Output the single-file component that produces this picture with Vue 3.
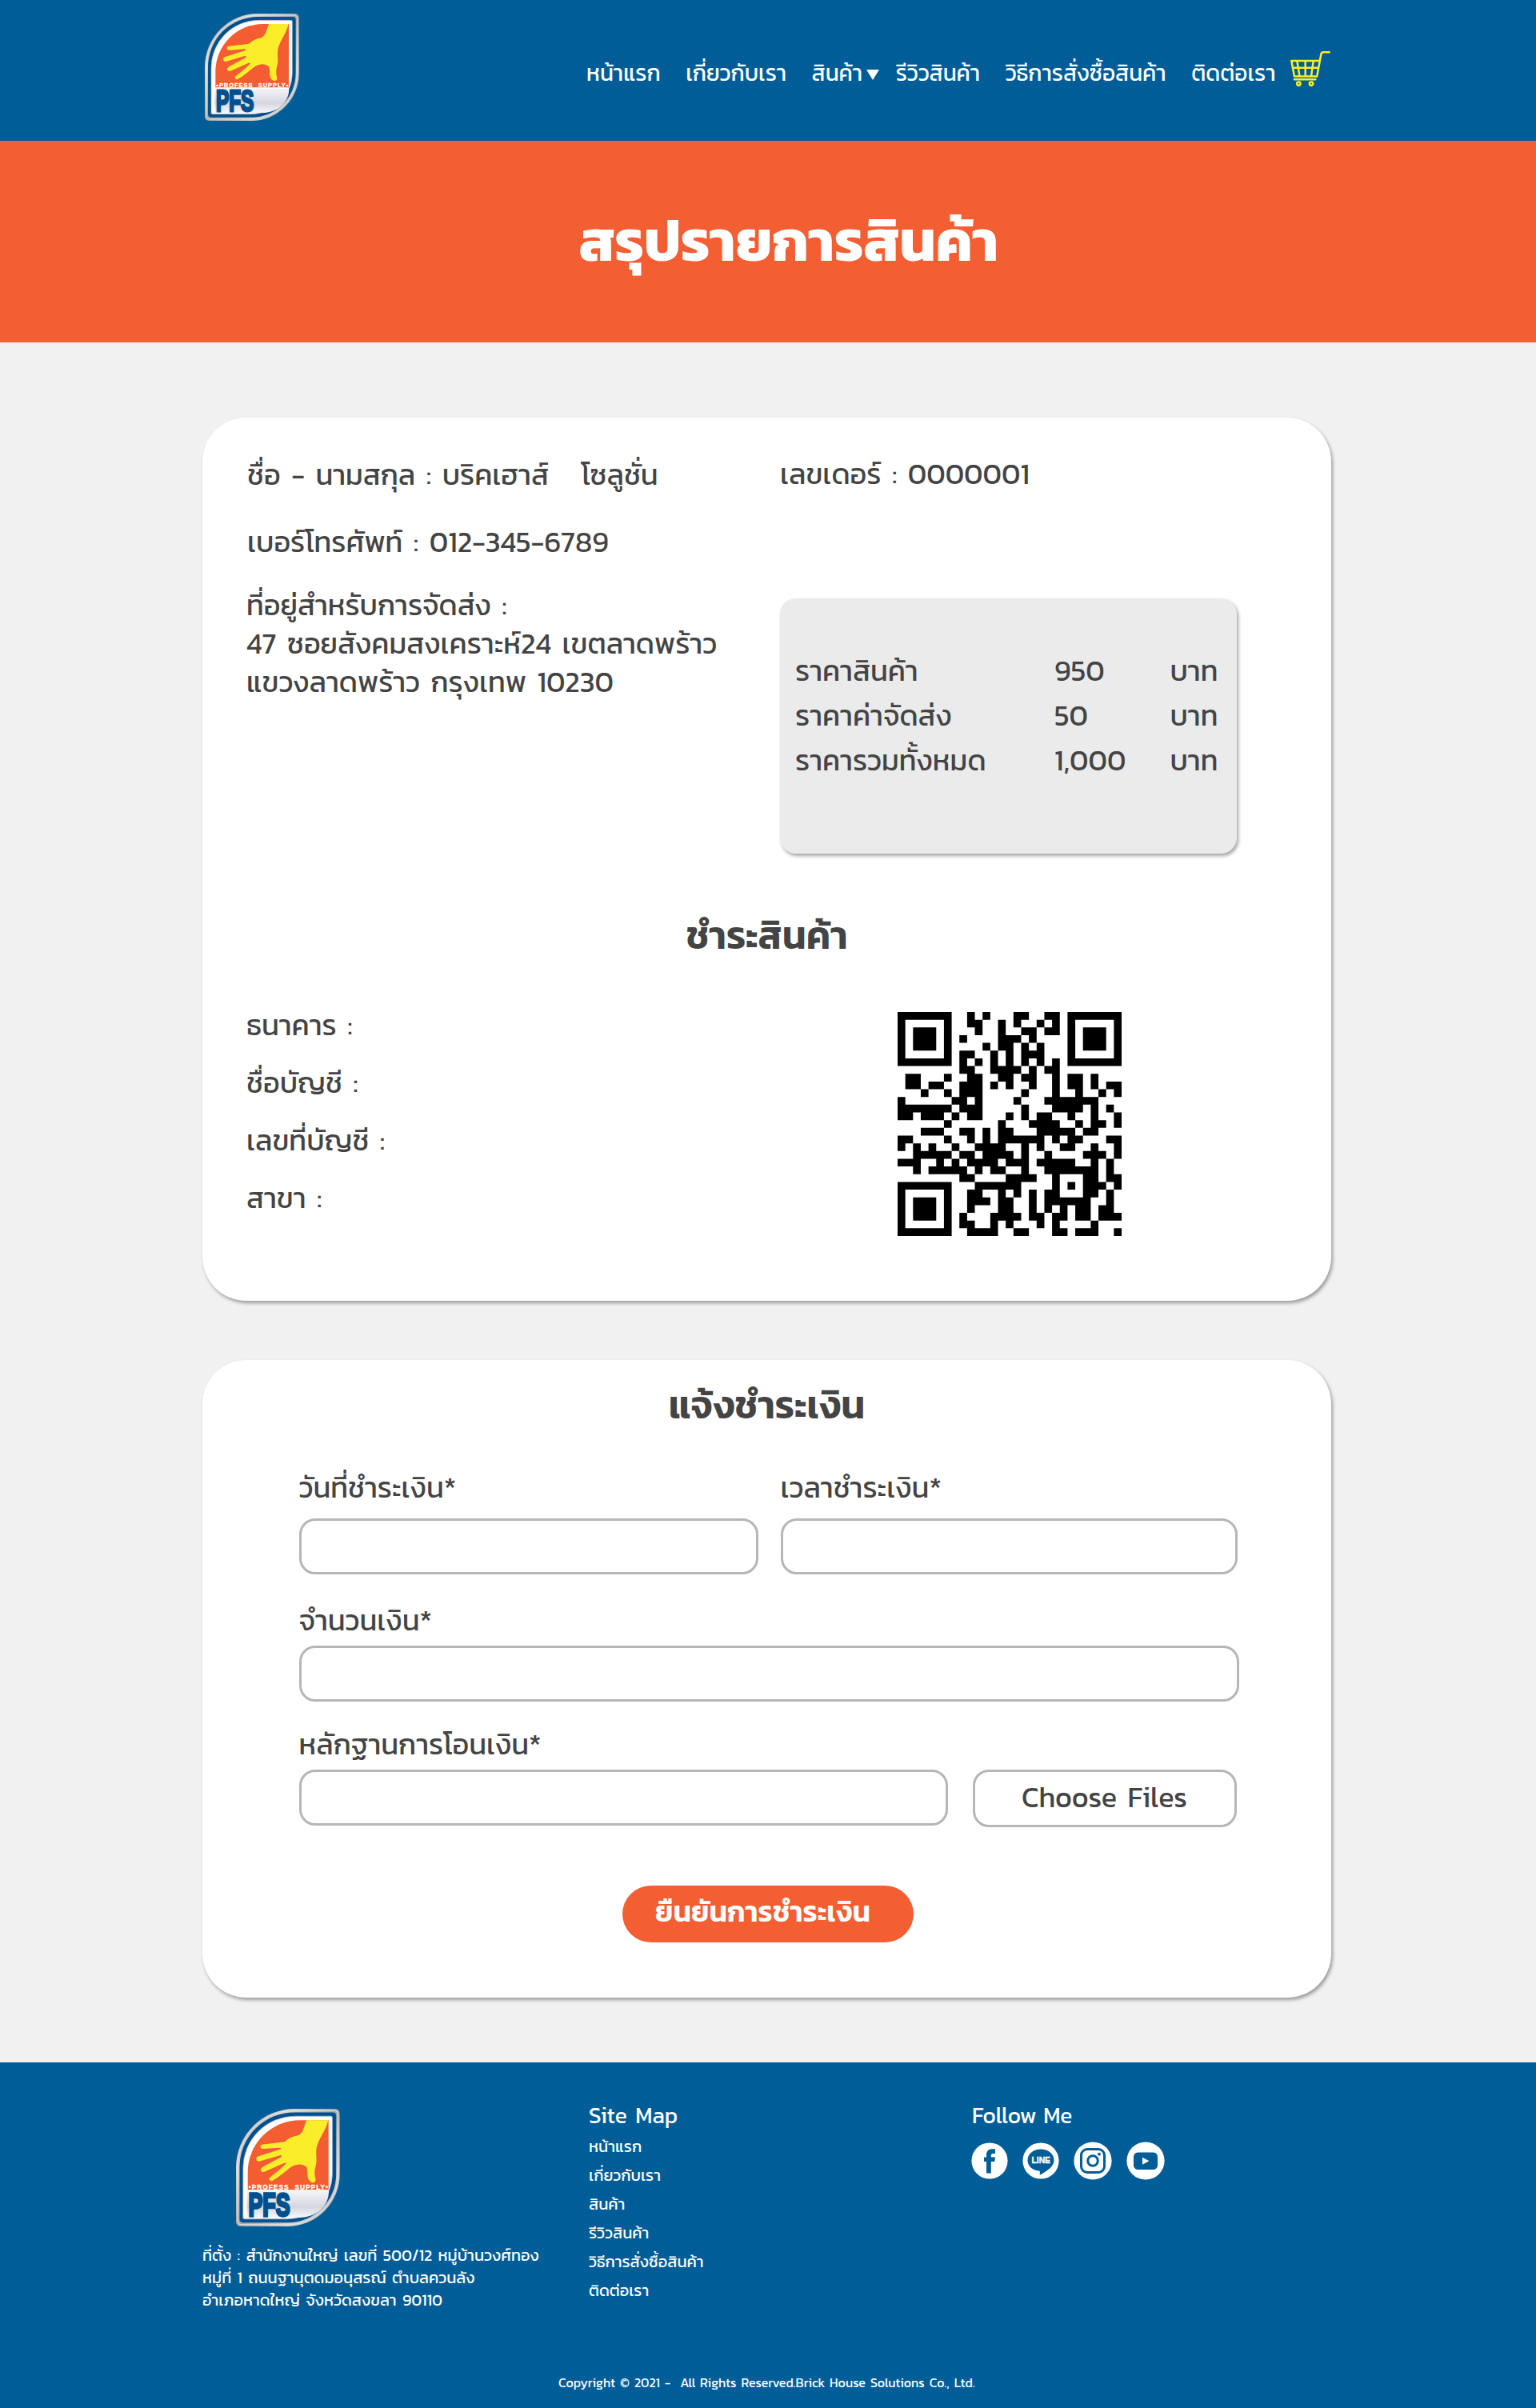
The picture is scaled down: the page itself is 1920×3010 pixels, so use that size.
<script setup>
import { h } from 'vue'

const leaf = (l, t, r, b, rt, rb, c) =>
  `M${l + rt} ${t}H${r - c}Q${r} ${t} ${r} ${t + c}V${b - rb}A${rb} ${rb} 0 0 1 ${r - rb} ${b}H${l + c}Q${l} ${b} ${l} ${b - c}V${t + rt}A${rt} ${rt} 0 0 1 ${l + rt} ${t}Z`

const BrandLogo = (props) =>
  h('svg', { viewBox: '48 51 354 402', preserveAspectRatio: 'none', role: 'img', 'aria-label': 'PFS' }, [
    h('defs', [
      h('linearGradient', { id: 'rim-' + props.uid, x1: 0, y1: 0, x2: 1, y2: 1 }, [
        h('stop', { offset: '0', 'stop-color': '#8f9498' }),
        h('stop', { offset: '.25', 'stop-color': '#d9d7d5' }),
        h('stop', { offset: '.5', 'stop-color': '#a3a5a8' }),
        h('stop', { offset: '.75', 'stop-color': '#d4d2d0' }),
        h('stop', { offset: '1', 'stop-color': '#a8a6a5' })
      ]),
      h('linearGradient', { id: 'base-' + props.uid, x1: 0, y1: 0, x2: 0, y2: 1 }, [
        h('stop', { offset: '0', 'stop-color': '#f4f4f8' }),
        h('stop', { offset: '.6', 'stop-color': '#d6d6e0' }),
        h('stop', { offset: '1', 'stop-color': '#f6f6fa' })
      ])
    ]),
    h('path', { d: leaf(48, 51, 401, 453, 200, 178, 17), fill: `url(#rim-${props.uid})` }),
    h('path', { d: leaf(54, 57, 395, 447, 194, 172, 13), fill: 'none', stroke: '#e6e4e2', 'stroke-width': 3 }),
    h('path', { d: leaf(60, 63, 389, 440, 188, 166, 12), fill: '#00508f' }),
    h('path', { d: leaf(72, 76, 376, 428, 178, 155, 5), fill: '#fff', stroke: '#9fa9b4', 'stroke-width': 2 }),
    h('path', { d: 'M88 328V268A178 178 0 0 1 266 90H363V328Z', fill: '#f45d32' }),
    h('path', { d: 'M84 332H364C364 385 320 423 262 423H84Z', fill: `url(#base-${props.uid})` }),
    h('path', {
      d: 'M288 90H362C354 124 334 146 323 180C318 202 324 222 321 240C317 256 315 264 316 278L319 292Q320 303 309 303Q301 303 294 290C289 279 294 262 288 249Q277 240 262 241Q247 243 236 249C216 265 196 283 172 297Q164 300 161 292Q160 287 168 282Q198 259 218 239Q219 234 212 236L143 267Q134 269 132 260Q131 255 139 250L202 216Q205 209 197 210L127 231Q118 232 117 222Q117 215 125 213L200 189Q205 184 197 184L141 188Q131 188 131 180Q132 173 141 173L214 164Q230 148 250 144C276 142 278 116 288 90Z',
      fill: '#faee2b'
    }),
    h('text', { x: 91, y: 326, textLength: 270, 'font-size': 22.5, fill: '#fff', stroke: '#fff', 'stroke-width': 0.8, style: 'font-family:"Liberation Sans",sans-serif;font-weight:700;word-spacing:10px' }, '•PROFESS SUPPLY•'),
    h('text', { x: 90, y: 417, textLength: 142, lengthAdjust: 'spacingAndGlyphs', 'font-size': 112, fill: '#00508f', stroke: '#00508f', 'stroke-width': 9, style: 'font-family:"Liberation Sans",sans-serif;font-weight:700' }, 'PFS')
  ])
BrandLogo.props = ['uid']

const nav = ['หน้าแรก', 'เกี่ยวกับเรา', 'สินค้า', 'รีวิวสินค้า', 'วิธีการสั่งซื้อสินค้า', 'ติดต่อเรา']

const customerName = 'ชื่อ - นามสกุล : บริคเฮาส์   โซลูชั่น'
const copyright = 'Copyright © 2021 -  All Rights Reserved.Brick House Solutions Co., Ltd.'

const prices = [
  ['ราคาสินค้า', '950'],
  ['ราคาค่าจัดส่ง', '50'],
  ['ราคารวมทั้งหมด', '1,000']
]

const bank = ['ธนาคาร :', 'ชื่อบัญชี :', 'เลขที่บัญชี :', 'สาขา :']

// Dark modules per row, as column numbers and ranges; the three finders are drawn apart.
const qrRows = [
  '9 11 15-16 19-20', '9-10 13 15 18 20', '10 13 16-17 19-20', '8 13-15 17', '11 13-14 16 18',
  '8-9 12 14 16-18', '8 10 12 14 16 18 20', '8-9 12-15 17 19-20', '1-2 6 9-10 13-14 16-17 20 22-23 25',
  '1-2 4-5 8-10 12 14 17 20 22-23 25 27-28', '3 6 8-10 16 20 23 26 28', '0 7-8 10 15 19-25',
  '0-6 8-10 16 20-23 25 27', '0-1 3-5 7 9-10 14 16 18-19 22 25 28', '6 13 17-20 23 25-26 28',
  '3-5 8-9 11 13-14 18-22 24-25', '0-1 6 9 11 13-18 20 22-23 27-28', '0 2 4 7 10-13 16 18 21-22 25 28',
  '2-6 8-9 11-14 16 19 24-26 28', '0-2 5 7 9-12 14-16 18-22 25 27', '2 4-8 10 12-13 16 19-25 27',
  '8-9 14-17 20 24-25 27-28', '10-15 20 22 24-26 28', '9-10 13 15 17 19-20 24-25 27',
  '9-11 13-14 17 19-24 27', '9 13-14 17 19 21 23-24 26-27', '8 12-15 17-18 20-21 23-24 26-28',
  '8-9 12 14 18 20 25', '9-12 15-16 20-21 23-25 28'
]
const qrPath = qrRows
  .map((row, y) => row.split(' ').map((part) => {
    const [a, b = a] = part.split('-').map(Number)
    return `M${a} ${y}H${b + 1}V${y + 1}H${a}Z`
  }).join(''))
  .join('')
const finders = [[0, 0], [22, 0], [0, 22]]
</script>

<template>
  <div class="page">
    <header class="header">
      <BrandLogo uid="top" class="logo" />
      <nav class="nav">
        <a v-for="(item, i) in nav" :key="item" :class="{ 'has-menu': i === 2 }">{{ item }}<svg v-if="i === 2" class="caret" viewBox="0 0 16 13"><path d="M0 0H16L8 13Z" fill="#fff" /></svg></a>
      </nav>
      <svg class="cart" viewBox="0 0 50 44" fill="none" stroke="#faee2b" stroke-width="2.5" stroke-linejoin="round" stroke-linecap="round">
        <path d="M1.300 12H36M1.300 12L5 31.400H33.200L38.400 3.600Q39 1.300 41.400 1.300H48.700M2.800 20.800H34.800M8.300 12L11.500 31M18.700 12V31M28.800 12L26 31" />
        <path d="M5 35.200H31.200" />
        <circle cx="10.400" cy="40.600" r="2.200" /><circle cx="26" cy="40.600" r="2.200" />
      </svg>
    </header>

    <section class="banner"><h1>สรุปรายการสินค้า</h1></section>

    <main>
      <section class="card summary">
        <div class="order">
          <div class="customer">
            <p>{{ customerName }}</p>
            <p class="phone">เบอร์โทรศัพท์ : 012-345-6789</p>
            <address>ที่อยู่สำหรับการจัดส่ง :<br>47 ซอยสังคมสงเคราะห์24 เขตลาดพร้าว<br>แขวงลาดพร้าว กรุงเทพ 10230</address>
          </div>
          <div class="totals">
            <p>เลขเดอร์ : 0000001</p>
            <div class="price-box">
              <template v-for="[label, amount] in prices" :key="label">
                <span>{{ label }}</span><span>{{ amount }}</span><span>บาท</span>
              </template>
            </div>
          </div>
        </div>
        <h2>ชำระสินค้า</h2>
        <div class="payment">
          <ul><li v-for="line in bank" :key="line">{{ line }}</li></ul>
          <svg class="qr" viewBox="0 0 29 29">
            <path :d="qrPath" />
            <g v-for="[x, y] in finders" :key="`${x}-${y}`" :transform="`translate(${x} ${y})`">
              <path fill-rule="evenodd" d="M0 0H7V7H0ZM1 1V6H6V1ZM2 2H5V5H2Z" />
            </g>
          </svg>
        </div>
      </section>

      <section class="card notify">
        <h2>แจ้งชำระเงิน</h2>
        <form @submit.prevent>
          <div class="row top">
            <label class="date">วันที่ชำระเงิน*<input type="text"></label>
            <label class="time">เวลาชำระเงิน*<input type="text"></label>
          </div>
          <label class="amount">จำนวนเงิน*<input type="text"></label>
          <div class="row files">
            <label class="proof">หลักฐานการโอนเงิน*<input type="text"></label>
            <button type="button" class="choose">Choose Files</button>
          </div>
          <button type="submit" class="confirm">ยืนยันการชำระเงิน</button>
        </form>
      </section>
    </main>

    <footer class="footer">
      <div class="columns">
        <div class="about">
          <BrandLogo uid="foot" class="logo" />
          <p>ที่ตั้ง : สำนักงานใหญ่ เลขที่ 500/12 หมู่บ้านวงศ์ทอง<br>หมู่ที่ 1 ถนนฐานุตดมอนุสรณ์ ตำบลควนลัง<br>อำเภอหาดใหญ่ จังหวัดสงขลา 90110</p>
        </div>
        <div class="sitemap">
          <h3>Site Map</h3>
          <a v-for="item in nav" :key="item">{{ item }}</a>
        </div>
        <div class="follow">
          <h3>Follow Me</h3>
          <div class="social">
            <svg viewBox="0 0 46 46" width="46" height="46">
              <circle cx="23" cy="23" r="22.600" fill="#fff" />
              <path d="M19 38.500V24H16V18.500H19V16Q19 8.300 25.500 8.300H30V14H27.300Q24.800 14 24.800 16.300V18.500H30L29.300 24H24.800V38.500Z" fill="#005d97" />
            </svg>
            <svg viewBox="0 0 46 46" width="46" height="46">
              <circle cx="23" cy="23" r="22.600" fill="#fff" />
              <path d="M23 8.600C32.400 8.600 39.500 14.600 39.500 22.300C39.500 30 31 35.800 22.800 40.300C21.600 40.900 21.500 40 21.800 38.500C22.200 36.600 22 35.700 20 35.500C12 34.700 6.500 29.200 6.500 22.300C6.500 14.600 13.600 8.600 23 8.600Z" fill="#005d97" />
              <text x="11.500" y="26.300" textLength="23.500" lengthAdjust="spacingAndGlyphs" class="line-word">LINE</text>
            </svg>
            <svg viewBox="0 0 48 48" width="48" height="48">
              <circle cx="24" cy="24" r="23.600" fill="#fff" />
              <rect x="9.500" y="9.500" width="29" height="29" rx="7.500" fill="none" stroke="#005d97" stroke-width="3" />
              <circle cx="24" cy="24" r="6.300" fill="none" stroke="#005d97" stroke-width="3" />
              <circle cx="32" cy="15.700" r="1.900" fill="#005d97" />
            </svg>
            <svg viewBox="0 0 48 48" width="48" height="48">
              <circle cx="24" cy="24" r="23.600" fill="#fff" />
              <rect x="9" y="13.500" width="30" height="21.500" rx="5.500" fill="#005d97" />
              <path d="M20 19.700V28.700L28.500 24.200Z" fill="#fff" />
            </svg>
          </div>
        </div>
      </div>
      <p class="copyright">{{ copyright }}</p>
    </footer>
  </div>
</template>

<style>
body { margin: 0; }
</style>

<style scoped>
* { box-sizing: border-box; }
.page {
  width: 1920px;
  height: 3010px;
  background: #f1f1f1;
  color: #444;
  font: 400 36px/48px Kanit, Prompt, "Noto Sans", sans-serif;
  word-spacing: 5.200px;
  white-space: pre;
}
h1, h2, h3, p, ul { margin: 0; padding: 0; list-style: none; }
address { font-style: normal; }

.header {
  display: flex;
  align-items: flex-start;
  height: 176px;
  padding-left: 256px;
  background: #005d97;
  color: #fff;
}
.header .logo { width: 118px; height: 134px; margin-top: 17px; }
.nav { display: flex; gap: 31.500px; margin: 63px 0 0 359px; font-size: 28px; line-height: 56px; }
.nav .has-menu { margin-right: -10.500px; }
.caret { width: 16px; height: 13px; margin-left: 4.500px; vertical-align: 1px; }
.cart { width: 50px; height: 44px; margin: 64px 0 0 19px; }

.banner { height: 252px; padding-top: 75px; background: #f35e32; color: #fff; }
h1 { padding-left: 723.500px; font-size: 72px; line-height: 100px; font-weight: 700; }

main { display: flex; flex-direction: column; gap: 74px; padding: 94px 0 0 253px; }
.card {
  width: 1411px;
  border-radius: 55px;
  background: #fff;
  box-shadow: 2px 3px 4px rgba(0, 0, 0, .35);
}
h2 { font-size: 48px; line-height: 60px; font-weight: 600; text-align: center; }

.summary { height: 1104px; padding-top: 45.500px; }
.order { display: flex; }
.customer { width: 722px; padding: 1px 0 0 56px; }
.phone { margin-top: 36.700px; }
address { margin: 31px 0 0 -1px; }
.price-box {
  display: grid;
  grid-template-columns: 324px 144.500px auto;
  grid-auto-rows: 56.200px;
  align-items: center;
  width: 571px;
  height: 319px;
  margin-top: 132.500px;
  padding: 61.700px 0 0 19px;
  border-radius: 20px;
  background: #ebebeb;
  box-shadow: 2px 3px 4px rgba(0, 0, 0, .35);
}
.summary h2 { margin-top: 72px; }
.payment { display: flex; justify-content: space-between; margin: 46px 262px 0 55px; line-height: 72px; }
.qr { width: 280px; height: 280px; margin-top: 20px; }

.notify { height: 797px; padding-top: 26px; }
form { width: 1175px; margin: 49px 0 0 120.500px; }
.row { display: flex; }
label { display: block; }
input {
  display: block;
  width: 100%;
  height: 70px;
  margin: 8px 0 0;
  padding: 0 20px;
  border: 3px solid #b6b6b6;
  border-radius: 20px;
  background: #fff;
  font: inherit;
}
.top input { margin-top: 15px; }
.date { width: 574px; }
.time { width: 571px; margin-left: 28px; }
.amount { margin-top: 33px; }
.files { align-items: flex-start; margin-top: 29px; }
.proof { width: 811px; }
button { padding: 0; border: 0; font: inherit; color: inherit; word-spacing: inherit; }
.choose {
  width: 330px;
  height: 72px;
  margin: 56px 0 0 31px;
  padding-bottom: 5px;
  border: 3px solid #b6b6b6;
  border-radius: 20px;
  background: #fff;
}
.confirm {
  display: block;
  width: 364px;
  height: 71px;
  margin: 73px 0 0 404px;
  padding: 0 12px 7px 0;
  border-radius: 36px;
  background: #f35e32;
  color: #fff;
  font-weight: 600;
}

.footer {
  height: 432px;
  margin-top: 81px;
  padding: 46px 0 0 253px;
  background: #005d97;
  color: #fff;
  font-size: 20px;
}
.columns { display: flex; height: 340px; }
.about { width: 483px; padding-top: 12px; line-height: 28px; word-spacing: 2.700px; }
.about .logo { display: block; width: 130px; height: 147px; margin: 0 0 22px 42px; }
h3 { font-size: 28px; line-height: 40px; font-weight: 400; word-spacing: 4px; }
.sitemap { display: flex; flex-direction: column; width: 479px; line-height: 36px; }
.sitemap h3 { margin-bottom: 1px; }
.follow h3 { word-spacing: 2px; }
.social { display: flex; align-items: center; gap: 18px; margin: 13px 0 0 -1px; }
.line-word { font: 700 10.500px "Liberation Sans", sans-serif; fill: #fff; stroke: #fff; stroke-width: .4; word-spacing: 0; }
.copyright { margin: 2px 0 0 445px; font-size: 16px; line-height: 24px; word-spacing: 2.300px; }
</style>
